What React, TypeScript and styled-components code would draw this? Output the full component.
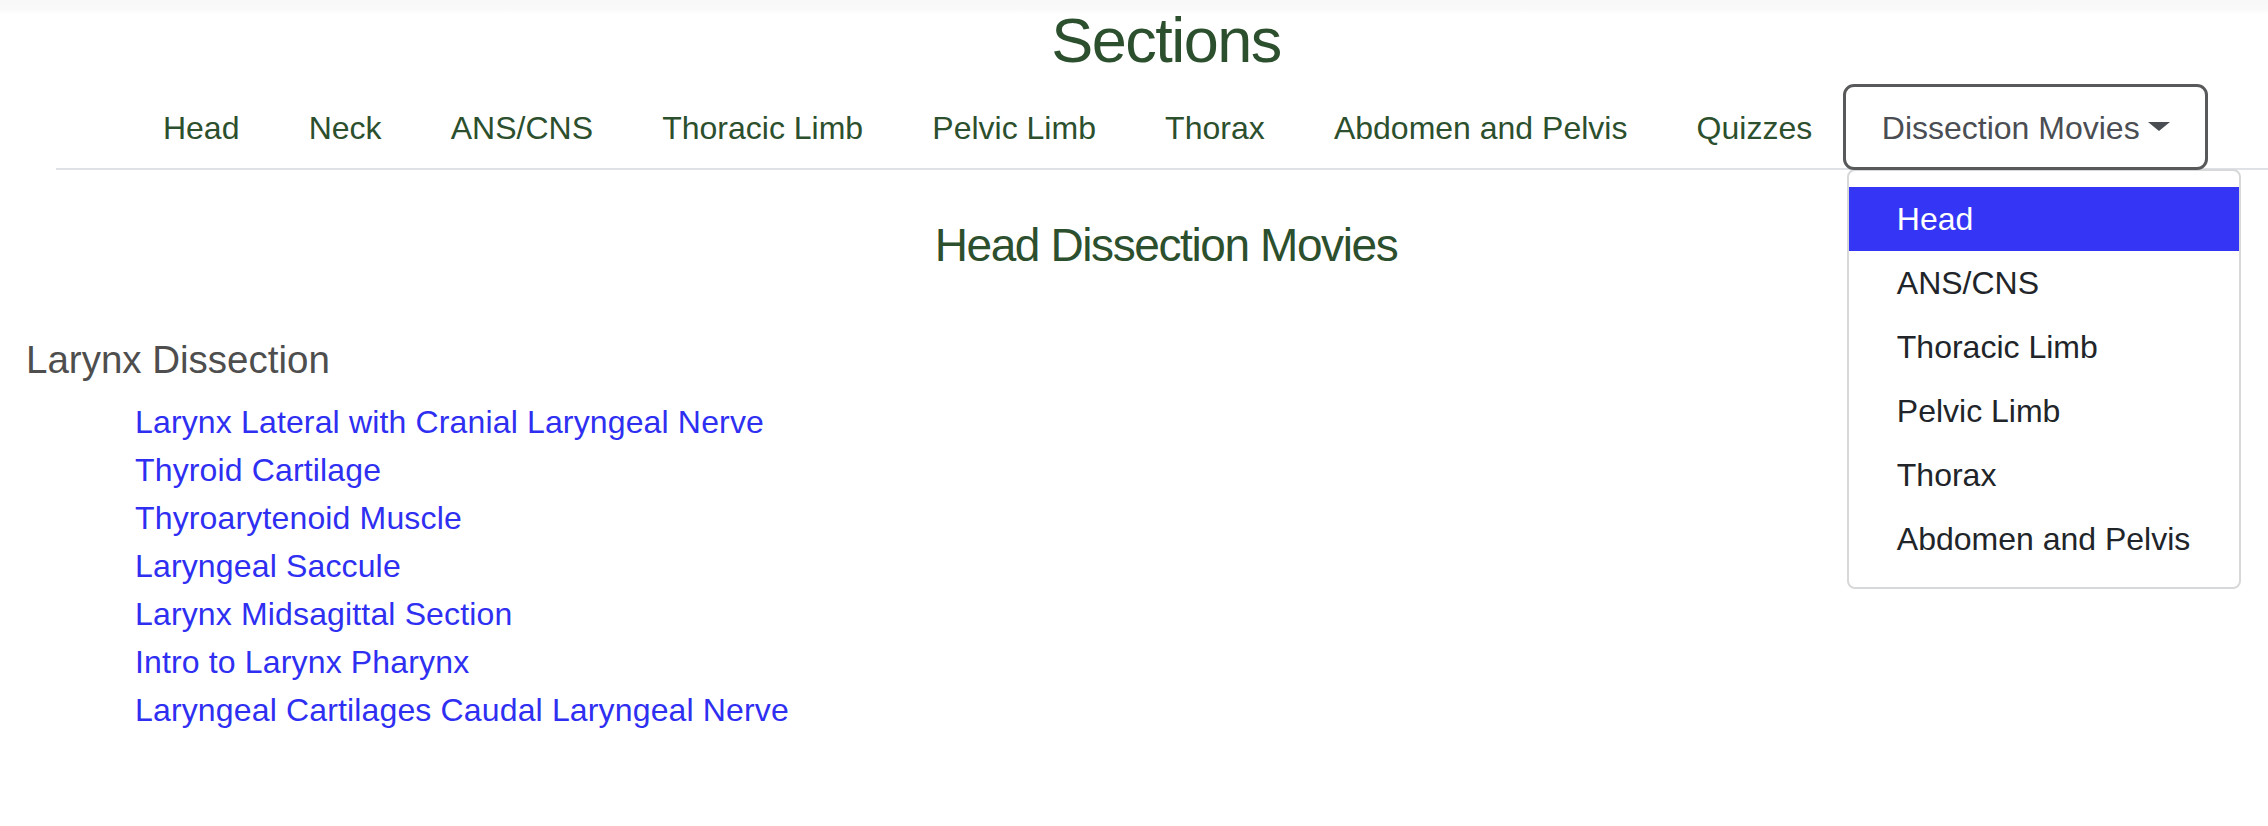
import React from 'react'
import styled, { createGlobalStyle } from 'styled-components'

const GlobalStyle = createGlobalStyle`
    body{
        margin: 0;
        font-family: 'Liberation Sans', Arial, sans-serif;
        color: #212529;
        background: linear-gradient(to bottom, #f8f8f8 0, #f9f9f9 9px, #ffffff 14px);
        min-height: 826px;
    }
`;

const sections = ['Head', 'Neck', 'ANS/CNS', 'Thoracic Limb', 'Pelvic Limb', 'Thorax', 'Abdomen and Pelvis', 'Quizzes']
const movieSections = ['Head', 'ANS/CNS', 'Thoracic Limb', 'Pelvic Limb', 'Thorax', 'Abdomen and Pelvis']
const movies = [
    'Larynx Lateral with Cranial Laryngeal Nerve',
    'Thyroid Cartilage',
    'Thyroarytenoid Muscle',
    'Laryngeal Saccule',
    'Larynx Midsagittal Section',
    'Intro to Larynx Pharynx',
    'Laryngeal Cartilages Caudal Laryngeal Nerve',
]

export default function App() {
    return (
        <>
            <GlobalStyle />
            <Header>
                <Title>Sections</Title>
                <NavBar>
                    {sections.map(s => (
                        <NavItem key={s}><NavLink href="#">{s}</NavLink></NavItem>
                    ))}
                    <DropdownItem>
                        <DropdownToggle>
                            Dissection Movies<Caret />
                        </DropdownToggle>
                        <DropdownMenu>
                            {movieSections.map((s, i) => (
                                <MenuLink key={s} href="#" $active={i === 0}>{s}</MenuLink>
                            ))}
                        </DropdownMenu>
                    </DropdownItem>
                </NavBar>
            </Header>

            <Main>
                <PageTitle>Head Dissection Movies</PageTitle>
                <GroupTitle>Larynx Dissection</GroupTitle>
                <MovieList>
                    {movies.map(m => (
                        <li key={m}><MovieLink href="#">{m}</MovieLink></li>
                    ))}
                </MovieList>
            </Main>
        </>
    )
}

const Header = styled.header`
    margin-left: 56px;
`;

const Title = styled.h1`
    margin: 0;
    padding: 2px 0 0 8px;
    text-align: center;
    font-size: 63px;
    line-height: 76px;
    font-weight: 400;
    letter-spacing: -1.5px;
    color: #2c4f2d;
`;

const NavBar = styled.ul`
    list-style: none;
    margin: 6px 0 0;
    padding: 0 0 0 12px;
    display: flex;
    justify-content: center;
    align-items: flex-end;
    border-bottom: 2px solid #dee2e6;
`;

const NavItem = styled.li`
    display: block;
`;

const NavLink = styled.a`
    display: block;
    padding: 20px 34.6px 16px;
    font-size: 32px;
    line-height: 48px;
    color: #2c4f2d;
    text-decoration: none;
`;

const DropdownItem = styled.li`
    position: relative;
    display: block;
    margin: 0 0 -2px -4px;
`;

const DropdownToggle = styled.button`
    position: relative;
    z-index: 2;
    display: flex;
    align-items: baseline;
    height: 86px;
    box-sizing: border-box;
    padding: 17px 35px 14px 36px;
    border: 3px solid #58595b;
    border-radius: 11px;
    background: #ffffff;
    font-family: 'Liberation Sans', Arial, sans-serif;
    font-size: 32px;
    line-height: 48px;
    color: #4a4e53;
`;

const Caret = styled.span`
    display: inline-block;
    margin-left: 8px;
    width: 0;
    height: 0;
    position: relative;
    top: -8px;
    border-top: 9px solid #4a4e53;
    border-left: 11px solid transparent;
    border-right: 11px solid transparent;
`;

const DropdownMenu = styled.div`
    position: absolute;
    z-index: 1;
    top: calc(100% - 1px);
    left: 4px;
    width: 394px;
    box-sizing: border-box;
    padding: 16px 0;
    background: #ffffff;
    border: 2px solid #d7d8d9;
    border-radius: 8px;
`;

const MenuLink = styled.a<{ $active?: boolean }>`
    display: block;
    padding: 8px 48px;
    font-size: 32px;
    line-height: 48px;
    text-decoration: none;
    white-space: nowrap;
    color: ${p => p.$active ? '#ffffff' : '#212529'};
    background: ${p => p.$active ? '#3535f5' : 'transparent'};
`;

const Main = styled.main`
    padding-left: 26px;
`;

const PageTitle = styled.h4`
    margin: 48px 0 0;
    padding-left: 38px;
    text-align: center;
    font-size: 46px;
    line-height: 55px;
    font-weight: 400;
    letter-spacing: -1.4px;
    color: #2c4f2d;
`;

const GroupTitle = styled.h5`
    margin: 64px 0 0;
    font-size: 38.5px;
    line-height: 46px;
    font-weight: 400;
    color: #4e4e4e;
`;

const MovieList = styled.ul`
    list-style: none;
    margin: 15px 0 0;
    padding-left: 109px;
    font-size: 32px;
    line-height: 48px;
    letter-spacing: 0.15px;
`;

const MovieLink = styled.a`
    color: #2f2ff2;
    text-decoration: none;
`;
